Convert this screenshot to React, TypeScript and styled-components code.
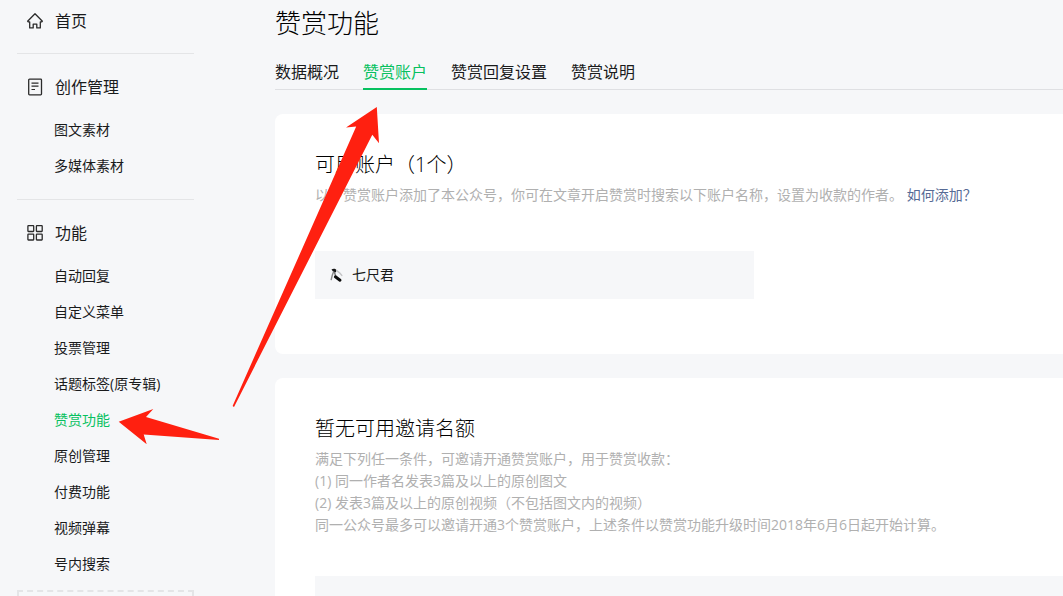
import React from 'react';
import styled, { createGlobalStyle } from 'styled-components';

const GlobalStyle = createGlobalStyle`
  *, *::before, *::after { box-sizing: border-box; }
  body {
    margin: 0;
    background: #f6f7f9;
    color: #1a1b1c;
    font-family: "Open Sans", "Noto Sans CJK SC", sans-serif;
    font-size: 14px;
    font-weight: 400;
    line-height: 22px;
  }
  h1, h2, p, ul { margin: 0; padding: 0; }
  h1, h2 { font-weight: 300; color: #000; }
  ul { list-style: none; }
  a { color: inherit; text-decoration: none; }
`;

const Page = styled.div`
  position: relative;
  display: flex;
  height: 100vh;
  overflow: hidden;
`;

const Sidebar = styled.nav`
  flex: none;
  width: 275px;
  padding: 1px 81px 0 17px;
`;

const Section = styled.section<{ $first?: boolean }>`
  padding: ${(p) => (p.$first ? '0 0 12px' : '13px 0 15px')};

  & + & { border-top: 1px solid #e4e5e7; }
  &:last-of-type { padding-bottom: 8px; }
`;

const SectionLink = styled.a`
  display: flex;
  align-items: center;
  gap: 10px;
  height: 40px;
  padding-left: 8px;
  font-size: 16px;

  svg { flex: none; }
`;

const SubList = styled.ul`
  padding-top: 5px;
`;

const SubLink = styled.a<{ $active?: boolean }>`
  display: block;
  height: 36px;
  padding-left: 37px;
  line-height: 36px;
  white-space: nowrap;
  color: ${(p) => (p.$active ? '#07c160' : 'inherit')};
`;

const DropZone = styled.div`
  height: 48px;
  border: 2px dashed #e4e5e7;
`;

const Main = styled.main`
  flex: 1;
  min-width: 0;
  padding-top: 5px;
`;

const Title = styled.h1`
  font-size: 26px;
  line-height: 36px;
`;

const Tabs = styled.div`
  display: flex;
  gap: 24px;
  margin: 14px 0 24px;
  border-bottom: 1px solid #dfe0e3;
`;

const Tab = styled.a<{ $active?: boolean }>`
  height: 35px;
  margin-bottom: -1px;
  border-bottom: 2px solid ${(p) => (p.$active ? '#07c160' : 'transparent')};
  color: ${(p) => (p.$active ? '#07c160' : 'inherit')};
  font-size: 16px;
  line-height: 34px;
`;

const Card = styled.section`
  margin-bottom: 24px;
  padding: 36px 0 55px 40px;
  border-radius: 8px 0 0 8px;
  background: #fff;
`;

const CardTitle = styled.h2`
  font-size: 20px;
  line-height: 30px;
`;

const Hint = styled.p`
  padding: 4px 0 45px;
  color: #b0b0b0;
`;

const HintLine = styled.span`
  display: block;
`;

const HelpLink = styled.a`
  color: #576b95;
`;

const Account = styled.div`
  display: flex;
  align-items: center;
  gap: 7px;
  max-width: 439px;
  height: 48px;
  padding: 0 14px;
  background: #f6f7f9;
`;

const Panel = styled.div`
  height: 48px;
  margin-top: -5px;
  background: #f6f7f9;
`;

const Annotations = styled.svg`
  position: absolute;
  top: 0;
  left: 0;
  pointer-events: none;
`;

const HomeIcon = () => (
  <svg width="20" height="20" viewBox="0 0 20 20" fill="none" stroke="#2b2b2b" strokeWidth="1.3" strokeLinejoin="round">
    <path d="M10 2.8 2.6 10.2 3.2 10.9H4.7V16.9H8.2V13.1H11.8V16.9H15.3V10.9H16.8L17.4 10.2Z" />
  </svg>
);

const DocIcon = () => (
  <svg width="20" height="20" viewBox="0 0 20 20" fill="none" stroke="#2b2b2b" strokeWidth="1.3">
    <rect x="3.7" y="2.2" width="12.8" height="15.6" rx="0.8" />
    <path d="M6.5 6.1H13.5M6.5 9.1H13.5M6.5 12.5H10" strokeWidth="1.2" />
  </svg>
);

const GridIcon = () => (
  <svg width="20" height="20" viewBox="0 0 20 20" fill="none" stroke="#2b2b2b" strokeWidth="1.3">
    <rect x="2.9" y="2.7" width="5.8" height="5.8" rx="0.5" />
    <rect x="11.4" y="2.7" width="5.8" height="5.8" rx="0.5" />
    <rect x="2.9" y="11.2" width="5.8" height="5.8" rx="0.5" />
    <rect x="11.4" y="11.2" width="5.8" height="5.8" rx="0.5" />
  </svg>
);

const Avatar = () => (
  <svg width="16" height="16" viewBox="0 0 16 16" fill="none" strokeLinecap="round">
    <path d="M2.5 2.6C4 1.4 6.5 1.6 7.4 3L7 5 5.2 5.8 4 4.6Z" fill="#151515" />
    <path d="M4.5 5 3.2 8.5 2.2 12.6" stroke="#888" strokeWidth="1.4" />
    <path d="M5.5 5.5 6.5 8.5" stroke="#777" strokeWidth="1.4" />
    <path d="M6.4 9.8 11 13.2" stroke="#0b0b0b" strokeWidth="3" />
    <path d="M8 3.8 11 6.2 12.8 8.4" stroke="#c4c5c7" strokeWidth="1.5" />
  </svg>
);

type Item = { label: string; active?: boolean };
type Group = { label: string; Icon: React.FC; items: Item[] };

const groups: Group[] = [
  { label: '首页', Icon: HomeIcon, items: [] },
  { label: '创作管理', Icon: DocIcon, items: [{ label: '图文素材' }, { label: '多媒体素材' }] },
  {
    label: '功能',
    Icon: GridIcon,
    items: [
      { label: '自动回复' },
      { label: '自定义菜单' },
      { label: '投票管理' },
      { label: '话题标签(原专辑)' },
      { label: '赞赏功能', active: true },
      { label: '原创管理' },
      { label: '付费功能' },
      { label: '视频弹幕' },
      { label: '号内搜索' },
    ],
  },
];

const tabs: Item[] = [
  { label: '数据概况' },
  { label: '赞赏账户', active: true },
  { label: '赞赏回复设置' },
  { label: '赞赏说明' },
];

const conditions = [
  '满足下列任一条件，可邀请开通赞赏账户，用于赞赏收款：',
  '(1) 同一作者名发表3篇及以上的原创图文',
  '(2) 发表3篇及以上的原创视频（不包括图文内的视频）',
  '同一公众号最多可以邀请开通3个赞赏账户，上述条件以赞赏功能升级时间2018年6月6日起开始计算。',
];

export default function App() {
  return (
    <>
      <GlobalStyle />
      <Page lang="zh-CN">
        <Sidebar>
          {groups.map(({ label, Icon, items }, i) => (
            <Section key={label} $first={i === 0}>
              <SectionLink href="#">
                <Icon />
                {label}
              </SectionLink>
              {items.length > 0 && (
                <SubList>
                  {items.map((item) => (
                    <li key={item.label}>
                      <SubLink href="#" $active={item.active}>{item.label}</SubLink>
                    </li>
                  ))}
                </SubList>
              )}
            </Section>
          ))}
          <DropZone />
        </Sidebar>

        <Main>
          <Title>赞赏功能</Title>
          <Tabs>
            {tabs.map((tab) => (
              <Tab key={tab.label} href="#" $active={tab.active}>{tab.label}</Tab>
            ))}
          </Tabs>

          <Card>
            <CardTitle>可用账户（1个）</CardTitle>
            <Hint>
              以下赞赏账户添加了本公众号，你可在文章开启赞赏时搜索以下账户名称，设置为收款的作者。{' '}
              <HelpLink href="#">如何添加？</HelpLink>
            </Hint>
            <Account>
              <Avatar />
              七尺君
            </Account>
          </Card>

          <Card>
            <CardTitle>暂无可用邀请名额</CardTitle>
            <Hint>
              {conditions.map((line) => (
                <HintLine key={line}>{line}</HintLine>
              ))}
            </Hint>
            <Panel />
          </Card>
        </Main>

        <Annotations width="400" height="460" viewBox="0 0 400 460" fill="#ff2010" aria-hidden="true">
          <path d="M376.8 107 346 127.6 356.2 126.6 232.6 406 234 407 372.3 134.7 379 143.2Z" />
          <path d="M118.7 421.7 153.3 409 146 417 219 438.8V440L143.7 434.6 146.7 444.3Z" />
        </Annotations>
      </Page>
    </>
  );
}
